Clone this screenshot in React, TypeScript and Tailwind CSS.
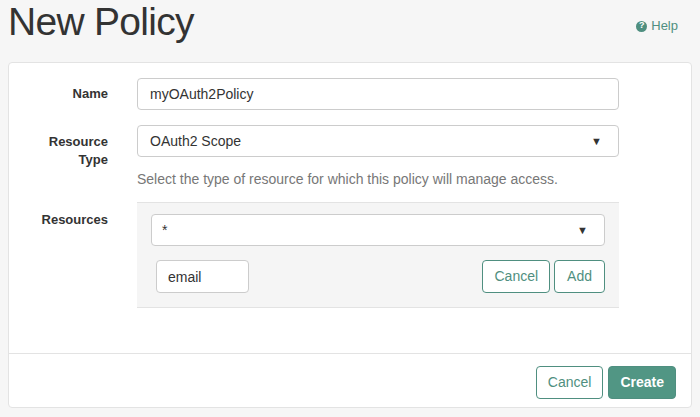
export default function App() {
  const font = { fontFamily: '"Liberation Sans", Arial, sans-serif' };
  return (
    <div className="w-[700px] h-[417px] bg-[#f6f6f6] text-[#333] overflow-hidden" style={font}>
      <div className="flex items-center justify-between pl-[8px] pr-[22px] h-[50px]">
        <h1 className="text-[39px] leading-none font-normal text-[#333] tracking-[-0.7px] -mt-[7px]">New Policy</h1>
        <a className="flex items-center gap-1 text-[13px] text-[#4f8f80] mt-[2px]">
          <span className="w-[11px] h-[11px] rounded-full bg-[#4f8f80] text-white text-[9px] font-bold flex items-center justify-center">?</span>
          Help
        </a>
      </div>
      <div className="mx-[8px] mt-[12px] bg-white border border-[#e3e3e3] rounded-[4px] h-[346px] flex flex-col">
        <div className="flex-1 pt-[15px]">
          <div className="flex items-center">
            <label className="w-[99px] text-right text-[13px] font-bold">Name</label>
            <input readOnly value="myOAuth2Policy" className="ml-[29px] w-[482px] h-[32px] border border-[#ccc] rounded-[4px] px-[12px] text-[14px] text-[#333]" />
          </div>
          <div className="flex mt-[15px]">
            <label className="w-[99px] text-right text-[13px] font-bold leading-[18px] pt-[8px]">Resource<br />Type</label>
            <div className="ml-[29px]">
              <div className="w-[482px] h-[32px] border border-[#ccc] rounded-[4px] px-[12px] text-[14px] flex items-center justify-between">
                OAuth2 Scope<span className="text-[11px] mr-[4px]">▼</span>
              </div>
              <p className="text-[14px] text-[#777] mt-[12px]">Select the type of resource for which this policy will manage access.</p>
            </div>
          </div>
          <div className="flex mt-[12px]">
            <label className="w-[99px] text-right text-[13px] font-bold pt-[8px]">Resources</label>
            <div className="ml-[29px] w-[482px] h-[106px] bg-[#f5f5f5] border-t border-b border-[#e3e3e3] px-[14px] pt-[11px]">
              <div className="h-[32px] bg-white border border-[#ccc] rounded-[4px] px-[10px] text-[14px] flex items-center justify-between">
                *<span className="text-[11px] mr-[6px]">▼</span>
              </div>
              <div className="flex items-center mt-[14px] pl-[5px]">
                <input readOnly value="email" className="w-[93px] h-[33px] bg-white border border-[#ccc] rounded-[4px] px-[11px] text-[14px]" />
                <div className="flex-1" />
                <button className="h-[33px] px-[11px] border border-[#4f8f80] rounded-[4px] text-[14px] text-[#4f8f80] bg-white">Cancel</button>
                <button className="ml-[4px] h-[33px] px-[12px] border border-[#4f8f80] rounded-[4px] text-[14px] text-[#4f8f80] bg-white">Add</button>
              </div>
            </div>
          </div>
        </div>
        <div className="border-t border-[#e3e3e3] h-[54px] flex items-center justify-end pr-[15px] gap-[5px] pt-[3px]">
          <button className="h-[33px] px-[11px] border border-[#4f8f80] rounded-[4px] text-[14px] text-[#4f8f80] bg-white">Cancel</button>
          <button className="h-[33px] px-[11px] border border-[#4f8f80] rounded-[4px] text-[14px] text-white bg-[#519684] font-bold">Create</button>
        </div>
      </div>
    </div>
  );
}
